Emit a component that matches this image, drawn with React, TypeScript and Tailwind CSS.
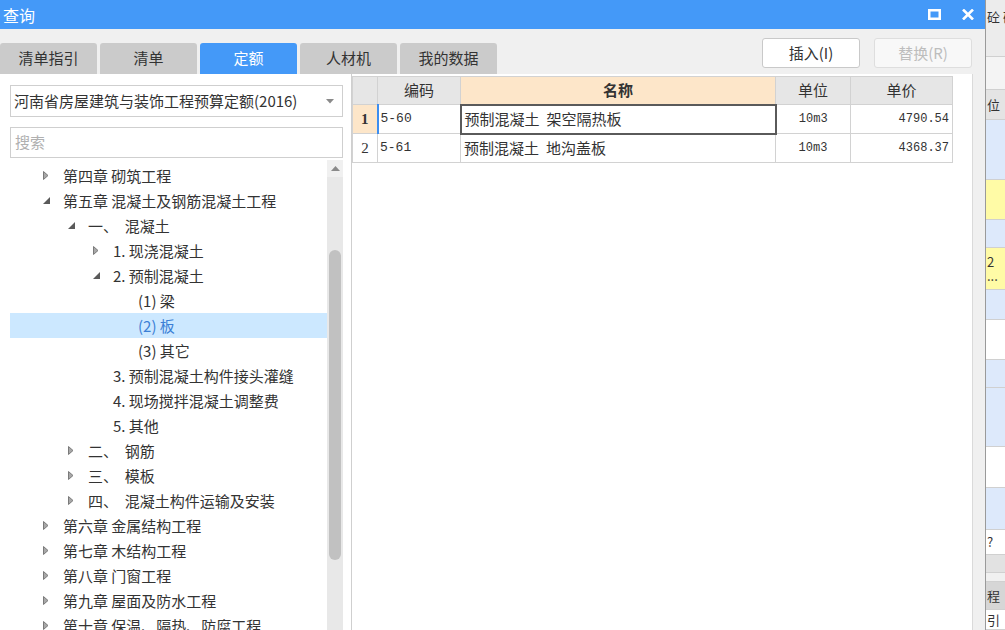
import React from "react";

type Node = {
  label: string;
  level: number;
  arrow?: "open" | "closed";
  selected?: boolean;
};

const treeNodes: Node[] = [
  { label: "第四章 砌筑工程", level: 0, arrow: "closed" },
  { label: "第五章 混凝土及钢筋混凝土工程", level: 0, arrow: "open" },
  { label: "一、\u00a0\u00a0混凝土", level: 1, arrow: "open" },
  { label: "1. 现浇混凝土", level: 2, arrow: "closed" },
  { label: "2. 预制混凝土", level: 2, arrow: "open" },
  { label: "(1) 梁", level: 3 },
  { label: "(2) 板", level: 3, selected: true },
  { label: "(3) 其它", level: 3 },
  { label: "3. 预制混凝土构件接头灌缝", level: 2 },
  { label: "4. 现场搅拌混凝土调整费", level: 2 },
  { label: "5. 其他", level: 2 },
  { label: "二、\u00a0\u00a0钢筋", level: 1, arrow: "closed" },
  { label: "三、\u00a0\u00a0模板", level: 1, arrow: "closed" },
  { label: "四、\u00a0\u00a0混凝土构件运输及安装", level: 1, arrow: "closed" },
  { label: "第六章 金属结构工程", level: 0, arrow: "closed" },
  { label: "第七章 木结构工程", level: 0, arrow: "closed" },
  { label: "第八章 门窗工程", level: 0, arrow: "closed" },
  { label: "第九章 屋面及防水工程", level: 0, arrow: "closed" },
  { label: "第十章 保温、隔热、防腐工程", level: 0, arrow: "closed" },
];

const indent = ["pl-[33px]", "pl-[58px]", "pl-[83px]", "pl-[108px]"];

const tabs = ["清单指引", "清单", "定额", "人材机", "我的数据"];

const rows = [
  { no: "1", code: "5-60", name: "预制混凝土 架空隔热板", unit: "10m3", price: "4790.54" },
  { no: "2", code: "5-61", name: "预制混凝土 地沟盖板", unit: "10m3", price: "4368.37" },
];

// stripes of the window behind the dialog
const backStripes = [
  { h: "h-[57px]", bg: "bg-[#ececec]", text: "砼 砖", top: true },
  { h: "h-[33px]", bg: "bg-[#f4f4f4]" },
  { h: "h-[30px]", bg: "bg-[#e4e4e4]", text: "位" },
  { h: "h-[60px]", bg: "bg-[#dde9fb]" },
  { h: "h-[40px]", bg: "bg-[#fffba6]" },
  { h: "h-[28px]", bg: "bg-[#dde9fb]" },
  { h: "h-[42px]", bg: "bg-[#fffba6]", text: "2\n..." },
  { h: "h-[30px]", bg: "bg-[#dde9fb]" },
  { h: "h-[40px]", bg: "bg-white" },
  { h: "h-[28px]", bg: "bg-[#dde9fb]" },
  { h: "h-[59px]", bg: "bg-[#dde9fb]" },
  { h: "h-[41px]", bg: "bg-white" },
  { h: "h-[42px]", bg: "bg-[#dde9fb]" },
  { h: "h-[25px]", bg: "bg-white", text: "?" },
  { h: "h-[18px]", bg: "bg-[#e2e2e2]" },
  { h: "h-[9px]", bg: "bg-[#f0f0f0]" },
  { h: "h-[28px]", bg: "bg-[#d6d6d6]", text: "程" },
  { h: "h-[20px]", bg: "bg-white", text: "引" },
];

const Arrow = ({ kind }: { kind: "open" | "closed" }) =>
  kind === "closed" ? (
    <svg width="6" height="9" viewBox="0 0 6 9">
      <polygon points="0.5,0.5 5,4.5 0.5,8.5" fill="#a8a8a8" stroke="#7a7a7a" strokeWidth="1" />
    </svg>
  ) : (
    <svg width="7" height="7" viewBox="0 0 7 7">
      <polygon points="7,0 7,7 0,7" fill="#5a5a5a" />
    </svg>
  );

const App = () => {
  return (
    <div className="w-[1005px] h-[630px] flex overflow-hidden font-['Microsoft_YaHei','Noto_Sans_CJK_SC',sans-serif] text-[#333]">
      {/* dialog */}
      <div className="w-[986px] shrink-0 h-full flex flex-col bg-[#f0f0f0] border-r border-[#9a9a9a]">
        <div className="h-[29px] shrink-0 bg-[#4499f8] flex items-center justify-between pl-[3px] pr-[11px]">
          <span className="text-white text-[16px] leading-none">查询</span>
          <div className="flex items-center gap-[21px]">
            <svg width="13" height="11" viewBox="0 0 13 11">
              <rect x="1.25" y="1.25" width="10.5" height="8.5" fill="none" stroke="white" strokeWidth="2.5" />
            </svg>
            <svg width="12" height="11" viewBox="0 0 12 11">
              <path d="M1 0.5 L11 10.5 M11 0.5 L1 10.5" stroke="white" strokeWidth="2.6" />
            </svg>
          </div>
        </div>

        <div className="h-[45px] shrink-0 flex items-end justify-between pr-[13px]">
          <div className="flex gap-[3px]">
            {tabs.map((t) => (
              <div
                key={t}
                className={`w-[97px] h-[31px] rounded-t-[3px] flex items-center justify-center text-[15px] ${
                  t === "定额" ? "bg-[#4499f8] text-white" : "bg-[#cbcbcb] text-[#333]"
                }`}
              >
                {t}
              </div>
            ))}
          </div>
          <div className="flex gap-[14px] self-start mt-[9px]">
            <button className="w-[98px] h-[30px] rounded-[3px] border border-[#c9c9c9] bg-white text-[15px] text-[#333]">
              插入(I)
            </button>
            <button className="w-[98px] h-[30px] rounded-[3px] border border-[#dedede] bg-[#f8f8f8] text-[15px] text-[#bdbdbd]">
              替换(R)
            </button>
          </div>
        </div>

        <div className="flex-1 flex min-h-0">
          {/* left panel */}
          <div className="w-[352px] shrink-0 bg-white border-r border-[#cfcfcf] pt-[11px] flex flex-col">
            <div className="mx-[10px] w-[333px] h-[32px] border border-[#cfcfcf] flex items-center justify-between pl-[3px] pr-[8px] text-[15px] text-[#333]">
              <span>河南省房屋建筑与装饰工程预算定额(2016)</span>
              <svg width="8" height="5" viewBox="0 0 8 5">
                <polygon points="0,0 8,0 4,4.5" fill="#8a8a8a" />
              </svg>
            </div>
            <div className="mx-[10px] mt-[10px] w-[333px] h-[31px] border border-[#cfcfcf] flex items-center pl-[4px] text-[15px] text-[#b0b0b0]">
              搜索
            </div>
            <div className="mt-[2px] ml-[10px] w-[333px] flex-1 flex min-h-0">
              <div className="w-[317px] pt-[3px] overflow-hidden">
                {treeNodes.map((n) => (
                  <div
                    key={n.label}
                    className={`h-[25px] flex items-center ${indent[n.level]} ${
                      n.selected ? "bg-[#cce8ff] text-[#3b7fd6]" : ""
                    }`}
                  >
                    <span className="w-[20px] shrink-0 flex items-center">
                      {n.arrow && <Arrow kind={n.arrow} />}
                    </span>
                    <span className="text-[15px] whitespace-pre leading-[25px]">{n.label}</span>
                  </div>
                ))}
              </div>
              <div className="w-[16px] bg-[#e8e8e8] flex flex-col items-center">
                <div className="h-[17px] w-full bg-[#f0f0f0] flex items-center justify-center">
                  <svg width="9" height="5" viewBox="0 0 9 5">
                    <polygon points="0,5 9,5 4.5,0" fill="#8a8a8a" />
                  </svg>
                </div>
                <div className="mt-[73px] w-[12px] h-[310px] rounded-full bg-[#c1c1c1]" />
              </div>
            </div>
          </div>

          {/* right panel */}
          <div className="flex-1 flex bg-[#f0f0f0] pr-[12px]">
            <div className="flex-1 bg-white border-r border-[#dadada] pt-[2px]">
              <table className="border-collapse table-fixed w-[600px] text-[15px]">
                <colgroup>
                  <col className="w-[25px]" />
                  <col className="w-[83px]" />
                  <col className="w-[315px]" />
                  <col className="w-[75px]" />
                  <col className="w-[102px]" />
                </colgroup>
                <thead>
                  <tr className="h-[28px]">
                    <th className="bg-[#e6e6e6] border border-[#d2d2d2]" />
                    <th className="bg-[#e6e6e6] border border-[#d2d2d2] font-normal">编码</th>
                    <th className="bg-[#fde6c9] border border-[#d2d2d2] font-bold">名称</th>
                    <th className="bg-[#e6e6e6] border border-[#d2d2d2] font-normal">单位</th>
                    <th className="bg-[#e6e6e6] border border-[#d2d2d2] font-normal">单价</th>
                  </tr>
                </thead>
                <tbody>
                  {rows.map((r, i) => (
                    <tr key={r.no} className="h-[29px]">
                      <td
                        className={`border border-[#d2d2d2] text-center font-['Liberation_Serif',serif] ${
                          i === 0 ? "bg-[#fde6c9] font-bold" : "bg-white"
                        }`}
                      >
                        {r.no}
                      </td>
                      <td
                        className={`border border-[#d2d2d2] pl-[2px] font-['Liberation_Mono',monospace] text-[13px] ${
                          i === 0 ? "border-l-2 border-l-[#3d8ef0]" : ""
                        }`}
                      >
                        {r.code}
                      </td>
                      <td
                        className={`pl-[3px] text-[15px] ${
                          i === 0 ? "border-2 border-[#5a5a5a]" : "border border-[#d2d2d2]"
                        }`}
                      >
                        {r.name.split(" ")[0]}
                        <span className="ml-[7px]">{r.name.split(" ")[1]}</span>
                      </td>
                      <td className="border border-[#d2d2d2] text-center font-['Liberation_Mono',monospace] text-[12px]">
                        {r.unit}
                      </td>
                      <td className="border border-[#d2d2d2] text-right pr-[3px] font-['Liberation_Mono',monospace] text-[12px]">
                        {r.price}
                      </td>
                    </tr>
                  ))}
                </tbody>
              </table>
            </div>
          </div>
        </div>
      </div>

      {/* window behind */}
      <div className="w-[19px] shrink-0 flex flex-col">
        {backStripes.map((s, i) => (
          <div
            key={i}
            className={`${s.h} ${s.bg} shrink-0 border-b border-[#d0d0d0] text-[13px] leading-[14px] text-[#333] whitespace-pre pl-[1px] flex overflow-hidden ${
              s.top ? "items-start pt-[10px]" : "items-center"
            }`}
          >
            {s.text}
          </div>
        ))}
      </div>
    </div>
  );
};

export default App;
